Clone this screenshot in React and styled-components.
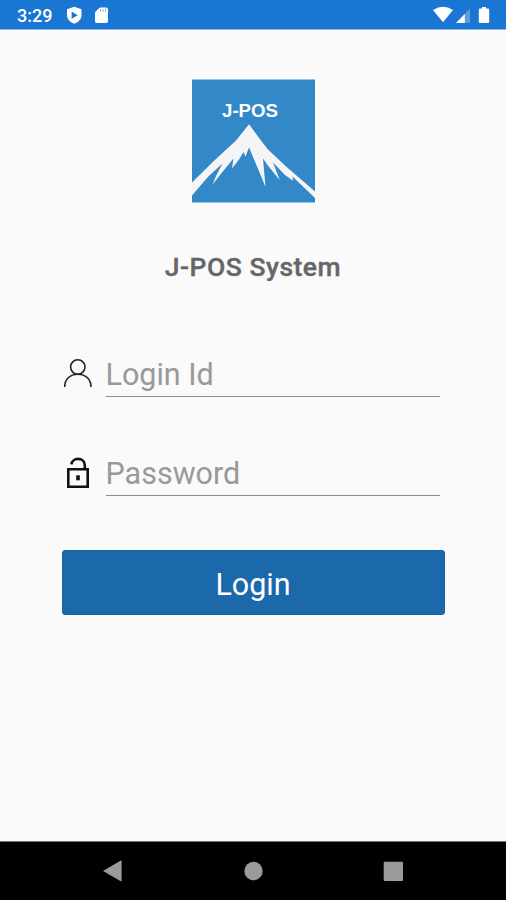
import React from "react";
import styled, { createGlobalStyle } from "styled-components";

const GlobalStyle = createGlobalStyle`
  * { box-sizing: border-box; }
  body { margin: 0; background: #fafafa; font-family: Roboto, "Liberation Sans", sans-serif; }
`;

const Screen = styled.div`
  width: 506px;
  height: 900px;
  display: flex;
  flex-direction: column;
  overflow: hidden;
  background: #fafafa;
`;

const StatusBar = styled.header`
  height: 30px;
  flex: none;
  display: flex;
  justify-content: space-between;
  background: #1976d2;
  border-bottom: 1px solid #8db8e6;
  color: #fff;
`;

const Clock = styled.span`
  width: 50px;
  padding-left: 17px;
  font-size: 18px;
  line-height: 32px;
  font-weight: 500;
  white-space: nowrap;
`;

const StatusGroup = styled.div`
  display: flex;
`;

const Main = styled.main`
  flex: 1;
  display: flex;
  flex-direction: column;
  align-items: center;
  padding-top: 49px;
`;

const Logo = styled.svg`
  width: 124px;
  height: 124px;
  flex: none;
`;

const Title = styled.h1`
  margin: 48px 0 0;
  height: 32px;
  font-size: 26.5px;
  line-height: 32px;
  font-weight: 500;
  letter-spacing: 0.5px;
  color: #666;
  -webkit-text-stroke: 0.35px #666;
`;

const Form = styled.form`
  width: 383px;
  margin-top: 69px;
  display: flex;
  flex-direction: column;
`;

const Field = styled.label`
  height: ${(p) => p.$height}px;
  display: flex;
  padding-right: 5px;
`;

const FieldIcon = styled.svg`
  width: 44px;
  height: 46px;
  flex: none;
`;

const Input = styled.input`
  flex: 1;
  min-width: 0;
  height: ${(p) => p.$height}px;
  padding: ${(p) => p.$drop}px 0 0;
  border: 0;
  border-bottom: 1px solid #8d8d8d;
  border-radius: 0;
  outline: 0;
  background: transparent;
  font: 400 30.5px/44px Roboto, sans-serif;
  color: #333;
  &::placeholder { color: #999; opacity: 1; }
`;

const LoginButton = styled.button`
  height: 65px;
  padding: 4px 0 0;
  border: 1px solid #1461a2;
  border-radius: 3px;
  background: #1b69aa;
  color: #fff;
  font: 400 30.5px/40px Roboto, sans-serif;
`;

const NavBar = styled.nav`
  height: 59px;
  flex: none;
  display: flex;
  justify-content: space-between;
  padding: 0 92px;
  background: #000;
  border-top: 1px solid #777;
`;

const NavIcon = styled.svg`
  width: 41px;
  height: 58px;
  fill: #9b9b9b;
`;

export default function App() {
  return (
    <>
      <GlobalStyle />
      <Screen>
        <StatusBar>
          <StatusGroup>
            <Clock>3:29</Clock>
            <svg width="70" height="29" viewBox="50 0 70 29">
              <path d="M74.3 6.8 81.5 9.3V15c0 4.2-3 7.2-7.2 8.7C70 22.2 67 19.2 67 15V9.3Z" fill="#fff" />
              <path d="m71.6 11.5 6.2 3.8-6.2 3.5Z" fill="#1976d2" />
              <path d="M99.8 7.5h6.4q1.8 0 1.8 1.8v12q0 1.7-1.8 1.7h-9.4Q95 23 95 21.3v-9Z" fill="#fff" />
              <path d="M100.5 9v3M103 9v3M105.5 9v3" stroke="#86b4e5" />
            </svg>
          </StatusGroup>
          <svg width="80" height="29" viewBox="426 0 80 29">
            <path d="M433 10q10-6.3 20 0l-10 12.3Z" fill="#fff" />
            <path d="M470 8.5V23h-14Z" fill="#5c9cdd" />
            <path d="M464.8 14v9H456Z" fill="#fff" />
            <path d="M482 7h4v1.6h2q1.2 0 1.2 1.2v12q0 1.2-1.2 1.2h-8q-1.2 0-1.2-1.2v-12q0-1.2 1.2-1.2h2Z" fill="#fff" />
          </svg>
        </StatusBar>

        <Main>
          <Logo viewBox="0 0 124 124" role="img" aria-label="J-POS">
            <path fill="#3388c8" d="M1 .5h123v123H1Z" />
            <path
              fill="#f5f5f5"
              d="M58 45.3 70 61.5 76.5 70 94.5 87 124 112.5v6.5L101.5 97.5l.5 4.2-8-5.7L82 83.5 88.7 101 76.5 86 72 79.5 74.5 108 67.5 91 58 68.5 54.5 77.5 52.5 73 48 80.5 41 89.5 42.5 79.5 33 91 21.5 105.5 25.5 96 31.5 84.5 17.3 97.5 1 116.5v-13L22.3 82.5 45 61.5Z"
            />
            <text x="59" y="37.8" textAnchor="middle" textLength="56" lengthAdjust="spacingAndGlyphs" fill="#fff" fontFamily="Liberation Sans, sans-serif" fontWeight="700" fontSize="18">J-POS</text>
          </Logo>
          <Title>J-POS System</Title>
          <Form onSubmit={(e) => e.preventDefault()}>
            <Field $height={98}>
              <FieldIcon viewBox="62 352 44 46" fill="none" stroke="#222" strokeWidth="1.6">
                <circle cx="77.8" cy="367" r="7.2" />
                <path d="M64.7 387c0-7.5 5-12.8 13.1-12.8S91 379.5 91 387" />
              </FieldIcon>
              <Input $height={45} $drop={1} placeholder="Login Id" aria-label="Login Id" />
            </Field>
            <Field $height={100}>
              <FieldIcon viewBox="62 450 44 46" fill="none" stroke="#111" strokeWidth="2.6">
                <path d="M68.3 469.2h19.4v17.5H68.3Z" />
                <path d="M71.4 464.3c.4-3.2 3.1-5.4 6.6-5.4 4 0 6.8 2.6 6.8 6.3v4" />
                <path d="M78 475.3v5" strokeWidth="3.6" />
              </FieldIcon>
              <Input $height={46} $drop={2} type="password" placeholder="Password" aria-label="Password" />
            </Field>
            <LoginButton type="submit">Login</LoginButton>
          </Form>
        </Main>

        <NavBar>
          <NavIcon viewBox="92 842 41 58"><path d="m103 871 17.8-10.4q.8-.3.8.6v19.6q0 .9-.8.5Z" /></NavIcon>
          <NavIcon viewBox="233 842 41 58"><circle cx="253.5" cy="871" r="9.2" /></NavIcon>
          <NavIcon viewBox="373 842 41 58"><rect x="383.7" y="861.7" width="19.3" height="19.3" rx="1" /></NavIcon>
        </NavBar>
      </Screen>
    </>
  );
}
